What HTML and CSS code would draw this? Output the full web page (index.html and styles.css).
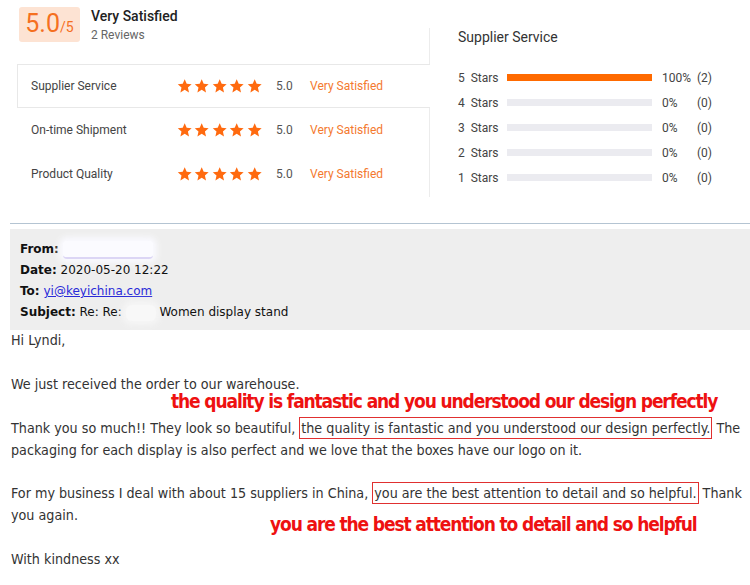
FILE: index.html
```html
<!DOCTYPE html>
<html>
<head>
<meta charset="utf-8">
<link rel="stylesheet" href="styles.css">
</head>
<body>
<div class="page">
  <section class="ratings">
    <div class="left">
      <div class="overall">
        <div class="score"><span class="big">5.0</span><span class="small">/5</span></div>
        <div class="overall-text">
          <div class="verdict">Very Satisfied</div>
          <div class="reviews">2 Reviews</div>
        </div>
      </div>
      <div class="rows">
        <div class="row active">
          <span class="label">Supplier Service</span>
          <span class="stars"><svg viewBox="0 0 24 24"><path d="M12 1.5l3.1 7.1 7.7.7-5.8 5.1 1.7 7.6L12 18l-6.7 4 1.7-7.6-5.8-5.1 7.7-.7z"/></svg><svg viewBox="0 0 24 24"><path d="M12 1.5l3.1 7.1 7.7.7-5.8 5.1 1.7 7.6L12 18l-6.7 4 1.7-7.6-5.8-5.1 7.7-.7z"/></svg><svg viewBox="0 0 24 24"><path d="M12 1.5l3.1 7.1 7.7.7-5.8 5.1 1.7 7.6L12 18l-6.7 4 1.7-7.6-5.8-5.1 7.7-.7z"/></svg><svg viewBox="0 0 24 24"><path d="M12 1.5l3.1 7.1 7.7.7-5.8 5.1 1.7 7.6L12 18l-6.7 4 1.7-7.6-5.8-5.1 7.7-.7z"/></svg><svg viewBox="0 0 24 24"><path d="M12 1.5l3.1 7.1 7.7.7-5.8 5.1 1.7 7.6L12 18l-6.7 4 1.7-7.6-5.8-5.1 7.7-.7z"/></svg></span>
          <span class="num">5.0</span>
          <span class="sat">Very Satisfied</span>
        </div>
        <div class="row">
          <span class="label">On-time Shipment</span>
          <span class="stars"><svg viewBox="0 0 24 24"><path d="M12 1.5l3.1 7.1 7.7.7-5.8 5.1 1.7 7.6L12 18l-6.7 4 1.7-7.6-5.8-5.1 7.7-.7z"/></svg><svg viewBox="0 0 24 24"><path d="M12 1.5l3.1 7.1 7.7.7-5.8 5.1 1.7 7.6L12 18l-6.7 4 1.7-7.6-5.8-5.1 7.7-.7z"/></svg><svg viewBox="0 0 24 24"><path d="M12 1.5l3.1 7.1 7.7.7-5.8 5.1 1.7 7.6L12 18l-6.7 4 1.7-7.6-5.8-5.1 7.7-.7z"/></svg><svg viewBox="0 0 24 24"><path d="M12 1.5l3.1 7.1 7.7.7-5.8 5.1 1.7 7.6L12 18l-6.7 4 1.7-7.6-5.8-5.1 7.7-.7z"/></svg><svg viewBox="0 0 24 24"><path d="M12 1.5l3.1 7.1 7.7.7-5.8 5.1 1.7 7.6L12 18l-6.7 4 1.7-7.6-5.8-5.1 7.7-.7z"/></svg></span>
          <span class="num">5.0</span>
          <span class="sat">Very Satisfied</span>
        </div>
        <div class="row">
          <span class="label">Product Quality</span>
          <span class="stars"><svg viewBox="0 0 24 24"><path d="M12 1.5l3.1 7.1 7.7.7-5.8 5.1 1.7 7.6L12 18l-6.7 4 1.7-7.6-5.8-5.1 7.7-.7z"/></svg><svg viewBox="0 0 24 24"><path d="M12 1.5l3.1 7.1 7.7.7-5.8 5.1 1.7 7.6L12 18l-6.7 4 1.7-7.6-5.8-5.1 7.7-.7z"/></svg><svg viewBox="0 0 24 24"><path d="M12 1.5l3.1 7.1 7.7.7-5.8 5.1 1.7 7.6L12 18l-6.7 4 1.7-7.6-5.8-5.1 7.7-.7z"/></svg><svg viewBox="0 0 24 24"><path d="M12 1.5l3.1 7.1 7.7.7-5.8 5.1 1.7 7.6L12 18l-6.7 4 1.7-7.6-5.8-5.1 7.7-.7z"/></svg><svg viewBox="0 0 24 24"><path d="M12 1.5l3.1 7.1 7.7.7-5.8 5.1 1.7 7.6L12 18l-6.7 4 1.7-7.6-5.8-5.1 7.7-.7z"/></svg></span>
          <span class="num">5.0</span>
          <span class="sat">Very Satisfied</span>
        </div>
      </div>
    </div>
    <div class="right">
      <div class="right-title">Supplier Service</div>
      <div class="dist">
        <div class="dist-row"><span class="dlabel">5&nbsp; Stars</span><span class="bar"><span class="fill" style="width:100%"></span></span><span class="pct">100%</span><span class="cnt">(2)</span></div>
        <div class="dist-row"><span class="dlabel">4&nbsp; Stars</span><span class="bar"><span class="fill" style="width:0%"></span></span><span class="pct">0%</span><span class="cnt">(0)</span></div>
        <div class="dist-row"><span class="dlabel">3&nbsp; Stars</span><span class="bar"><span class="fill" style="width:0%"></span></span><span class="pct">0%</span><span class="cnt">(0)</span></div>
        <div class="dist-row"><span class="dlabel">2&nbsp; Stars</span><span class="bar"><span class="fill" style="width:0%"></span></span><span class="pct">0%</span><span class="cnt">(0)</span></div>
        <div class="dist-row"><span class="dlabel">1&nbsp; Stars</span><span class="bar"><span class="fill" style="width:0%"></span></span><span class="pct">0%</span><span class="cnt">(0)</span></div>
      </div>
    </div>
  </section>

  <hr class="divider">

  <section class="mail-head">
    <div><b>From:</b> <span class="blur-from"></span></div>
    <div><b>Date:</b> 2020-05-20 12:22</div>
    <div><b>To:</b> <a class="mail-link" href="#">yi@keyichina.com</a></div>
    <div><b>Subject:</b> Re: Re: <span class="blur-subj"></span> Women display stand</div>
  </section>

  <section class="mail-body">
    <p>Hi Lyndi,</p>
    <p>We just received the order to our warehouse.</p>
    <p>Thank you so much!! They look so beautiful, <span class="boxed">the quality is fantastic and you understood our design perfectly.</span> The packaging for each display is also perfect and we love that the boxes have our logo on it.</p>
    <p>For my business I deal with about 15 suppliers in China, <span class="boxed">you are the best attention to detail and so helpful.</span> Thank you again.</p>
    <p>With kindness xx</p>
    <div class="note note-1">the quality is fantastic and you understood our design perfectly</div>
    <div class="note note-2">you are the best attention to detail and so helpful</div>
  </section>
</div>
</body>
</html>
```

FILE: styles.css
```css
* { box-sizing: border-box; }
html, body { margin: 0; padding: 0; background: #fff; }
.page { width: 750px; height: 585px; overflow: hidden; font-family: Roboto, "Liberation Sans", Arial, sans-serif; }

/* ratings */
.ratings { display: flex; }
.left {
  width: 430px;
  padding-left: 17px;
  background: linear-gradient(#ececec, #ececec) right 28px / 1px calc(100% - 28px) no-repeat;
}
.overall { display: flex; align-items: flex-start; padding: 7px 0 0 2px; height: 64px; }
.score {
  width: 61px; height: 35px;
  background: #fde3d3;
  border-radius: 3px;
  color: #f5701f;
  display: flex; align-items: baseline; justify-content: center;
  padding-top: 2px;
}
.score .big { font-size: 25px; line-height: 30px; }
.score .small { font-size: 14px; }
.overall-text { margin-left: 11px; margin-top: 0; }
.verdict { font-size: 14px; font-weight: 500; color: #222; line-height: 18px; }
.reviews { font-size: 12px; color: #666; line-height: 18px; margin-top: 1px; }

.rows { display: flex; flex-direction: column; padding-bottom: 1px; }
.row {
  height: 44px;
  display: flex; align-items: center;
  padding-left: 13px;
  font-size: 12px; color: #444;
  border: 1px solid transparent;
  border-right: 0;
}
.row.active { border-color: #e8e8e8; background: #fff; }
.label { width: 146px; }
.stars { display: flex; gap: 2px; width: 85px; }
.stars svg { width: 16px; height: 16px; fill: #ff6a0f; }
.num { margin-left: 14px; color: #555; width: 34px; }
.sat { color: #f4792e; }

.right { flex: 1; padding: 28px 0 0 28px; }
.right-title { font-size: 14px; color: #333; line-height: 18px; }
.dist { margin-top: 19px; display: flex; flex-direction: column; }
.dist-row { display: flex; align-items: center; height: 25px; font-size: 12px; color: #444; }
.dlabel { width: 49px; }
.bar { width: 145px; height: 7px; background: #ebebf0; display: block; }
.fill { display: block; height: 100%; background: #ff6a00; }
.pct { width: 35px; margin-left: 10px; }

/* divider */
.divider { margin: 26px 0 0 10px; border: 0; height: 1px; background: #b4c4d2; }

/* mail header */
.mail-head {
  margin: 5px 0 0 10px;
  background: #eeeeee;
  padding: 10px 10px 7px;
  font-family: "DejaVu Sans", Tahoma, sans-serif;
  font-size: 12px;
  line-height: 21px;
  color: #111;
}
.mail-head b { font-weight: bold; }
.mail-link { color: #2a2ad8; text-decoration: underline; }
.blur-from {
  display: inline-block; width: 90px; height: 18px; vertical-align: middle;
  background: #fbfbff; border-bottom: 2px solid #dcd6f5;
  border-radius: 4px; box-shadow: 0 0 6px 4px #fafaff;
}
.blur-subj {
  display: inline-block; width: 30px; height: 16px; vertical-align: middle;
  background: #f8f8f8; border-radius: 6px; box-shadow: 0 0 6px 4px #f6f6f6;
}

/* mail body */
.mail-body {
  position: relative;
  padding: 0 0 0 11px;
  font-family: "DejaVu Sans", sans-serif;
  font-stretch: condensed;
  font-size: 14.2px;
  line-height: 21.9px;
  color: #333;
}
.mail-body p { margin: 0 0 21.9px; }
.boxed { border: 1px solid #e03030; padding: 2px 1px; }
.note {
  position: absolute;
  font-family: "DejaVu Sans", sans-serif;
  font-stretch: condensed;
  font-weight: bold;
  color: #ee1111;
  font-size: 19px;
  letter-spacing: -1.13px;
  line-height: 24px;
  white-space: nowrap;
}
.note-1 { left: 171px; top: 59px; }
.note-2 { left: 270px; top: 182px; }
```
